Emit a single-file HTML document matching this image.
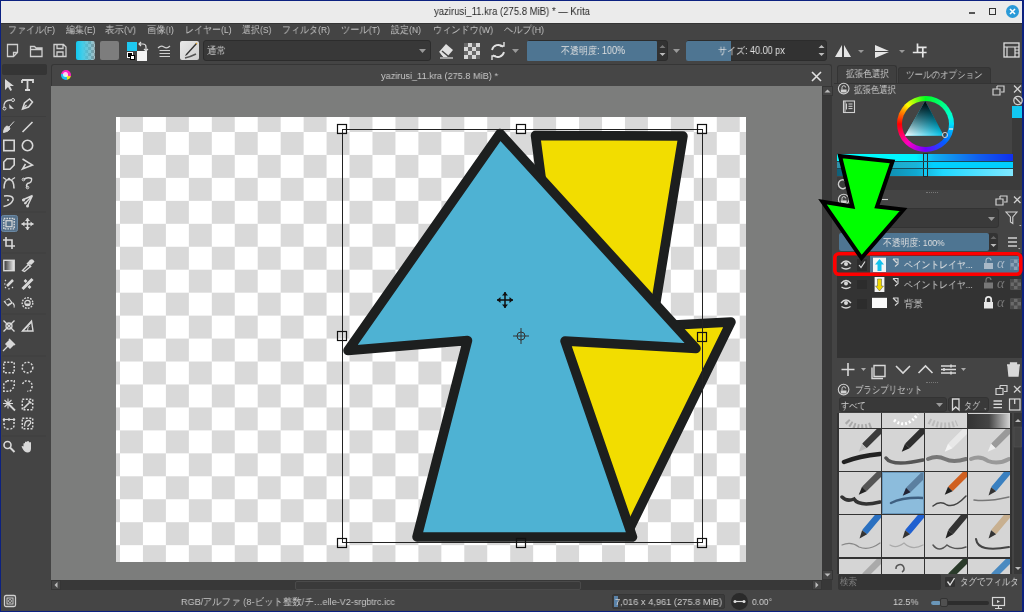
<!DOCTYPE html>
<html><head><meta charset="utf-8">
<style>
*{box-sizing:border-box;margin:0;padding:0}
html,body{width:1024px;height:612px;overflow:hidden}
body{background:#0c2180;font-family:"Liberation Sans",sans-serif;position:relative;color:#d0d0d0}
.a{position:absolute}
.t{position:absolute;white-space:nowrap;line-height:1;will-change:transform}
.menu{font-size:9.6px;color:#c4c4c4;top:25.4px}
svg{position:absolute;overflow:visible}
</style></head><body>
<!-- window background -->
<div class="a" style="left:1px;top:1px;width:1021px;height:610px;background:#444444"></div>
<!-- title bar -->
<div class="a" style="left:1px;top:1px;width:1021px;height:22px;background:#ebebeb"></div><div class="a" style="left:1px;top:23px;width:1021px;height:1px;background:#353535"></div>
<div class="t" style="transform:scaleX(0.9072);transform-origin:0 0;left:433.7px;top:6px;font-size:10.5px;color:#262626">yazirusi_11.kra (275.8 MiB) * — Krita</div>
<div class="a" style="left:969px;top:12.3px;width:6px;height:1.4px;background:#555"></div>
<div class="a" style="left:989px;top:8px;width:6.5px;height:6.5px;border:1.3px solid #333"></div>
<div class="a" style="left:1006px;top:4.7px;width:13px;height:13px;border-radius:50%;background:#2a9ad8"></div><svg width="14" height="14" style="left:1006px;top:4.7px"><path d="M4,4 l5,5 M9,4 l-5,5" stroke="#fff" stroke-width="1.6"/></svg>

<!-- MENU -->
<div class="t menu" style="transform:scaleX(0.8995);transform-origin:0 0;left:7.6px">ファイル(F)</div>
<div class="t menu" style="transform:scaleX(0.8995);transform-origin:0 0;left:65.5px">編集(E)</div>
<div class="t menu" style="transform:scaleX(0.9452);transform-origin:0 0;left:105px">表示(V)</div>
<div class="t menu" style="transform:scaleX(0.9290);transform-origin:0 0;left:147px">画像(I)</div>
<div class="t menu" style="transform:scaleX(0.8988);transform-origin:0 0;left:185px">レイヤー(L)</div>
<div class="t menu" style="transform:scaleX(0.8964);transform-origin:0 0;left:241.6px">選択(S)</div>
<div class="t menu" style="transform:scaleX(0.9001);transform-origin:0 0;left:282px">フィルタ(R)</div>
<div class="t menu" style="transform:scaleX(0.9231);transform-origin:0 0;left:341px">ツール(T)</div>
<div class="t menu" style="transform:scaleX(0.9001);transform-origin:0 0;left:391px">設定(N)</div>
<div class="t menu" style="transform:scaleX(0.9167);transform-origin:0 0;left:433px">ウィンドウ(W)</div>
<div class="t menu" style="transform:scaleX(0.9232);transform-origin:0 0;left:504px">ヘルプ(H)</div>
<svg width="1024" height="30" style="left:0;top:36px" fill="none" stroke="#cfcfcf" stroke-width="1.3">
  <path d="M7.5,8.5 h10 v8 l-4,4 h-6 z M13.5,20.5 v-4 h4"/>
  <path d="M30.5,10.5 h4 l1.5,1.5 h6 v8.5 h-11.5 z M30.5,13.5 h11.5"/>
  <path d="M54,8.5 h9.5 l2.5,2.5 v9.5 h-12 z M57,8.5 v4 h6 v-4 M57,20.5 v-4.5 h6 v4.5"/>
  <path d="M158,12 q3,-3 6,-1 t6,-1 M158,14.5 h12 M158,17.5 h12 M158,20.5 h12" stroke-width="1.2"/>
  <path d="M158,14.5 h1.5 M158,17.5 h1.5 M158,20.5 h1.5" stroke="#444444" stroke-width="1.2"/>
</svg>
<div class="a" style="left:76px;top:41px;width:19px;height:19px;border-radius:2px;background:linear-gradient(90deg,#11c8f0 0%,#44cde8 35%,rgba(80,200,230,0.2) 100%),repeating-conic-gradient(#bcbcbc 0 25%,#8a8a8a 0 50%) 0 0/6px 6px"></div>
<div class="a" style="left:100px;top:41px;width:19px;height:19px;border-radius:2px;background:#7d7d7d"></div>
<div class="a" style="left:127px;top:41.5px;width:9.5px;height:9.5px;background:#1ec8f0"></div>
<div class="a" style="left:137px;top:51px;width:9.5px;height:9.5px;background:#f4f4f4"></div>
<div class="a" style="left:127px;top:52px;width:6px;height:6px;background:#000;border:1px solid #fff"></div>
<div class="a" style="left:130px;top:55px;width:5px;height:5px;background:#fff;border:1px solid #000"></div>
<svg width="14" height="12" style="left:137px;top:41px" fill="none" stroke="#ddd" stroke-width="1.2"><path d="M2,3 h4 q3,0 3,3 v4 M7,8 l2,2 l2,-2 M4,1 l-2,2 l2,2"/></svg>
<div class="a" style="left:180px;top:41px;width:19px;height:19px;border-radius:2px;background:linear-gradient(135deg,#e8e8e8,#cfcfcf)"></div>
<svg width="19" height="19" style="left:180px;top:41px"><path d="M16,2 L6,13 L5,15 L7,14 L17,3 z" fill="#333"/><path d="M16,2 l1,1" stroke="#d9a030" stroke-width="1.5"/><path d="M5,17 q5,-1 11,-4" stroke="#555" stroke-width="1.5" fill="none"/></svg>
<!-- blend mode combo -->
<div class="a" style="left:203px;top:40px;width:228px;height:21px;background:#383838;border:1px solid #2c2c2c;border-radius:3px"></div>
<div class="t" style="transform:scaleX(0.9500);transform-origin:0 0;left:207px;top:45.5px;font-size:10px;color:#d0d0d0">通常</div>
<svg width="8" height="5" style="left:419px;top:49px"><path d="M0,0 h7 l-3.5,4 z" fill="#999"/></svg>
<!-- eraser, checker, reload -->
<svg width="20" height="20" style="left:436px;top:40px"><path d="M3,12 l7,-8 l7,6 l-6,7 h-4 z" fill="#e0e0e0"/><path d="M3,12 l4,5 h-4 z" fill="#444444"/><path d="M4,18 h13" stroke="#e0e0e0" stroke-width="1.2"/><path d="M6,11 l6,5" stroke="#444444" stroke-width="1.5"/></svg>
<div class="a" style="left:464px;top:43px;width:16px;height:16px;background:repeating-conic-gradient(#e0e0e0 0 25%,#6a6a6a 0 50%) 0 0/8px 8px;opacity:.95"></div>
<svg width="18" height="18" style="left:489px;top:42px" fill="none" stroke="#e0e0e0" stroke-width="1.8"><path d="M14,5 A6.5,6.5 0 0 0 3,8"/><path d="M4,13 A6.5,6.5 0 0 0 15,10"/><path d="M11,4 h4 v-4 M7,14 h-4 v4" stroke-width="1.4"/></svg>
<svg width="8" height="5" style="left:512px;top:49px"><path d="M0,0 h7 l-3.5,4 z" fill="#999"/></svg>
<!-- opacity slider -->
<div class="a" style="left:527px;top:40px;width:141px;height:21px;background:#323232;border-radius:3px;border:1px solid #2c2c2c"></div>
<div class="a" style="left:527px;top:40.5px;width:130px;height:20px;background:#4e7592;border-radius:1px"></div>
<div class="t" style="transform:scaleX(0.8996);transform-origin:0 0;left:560.6px;top:45.5px;font-size:10px;color:#e2e2e2">不透明度: 100%</div>
<svg width="8" height="16" style="left:659px;top:43px"><path d="M0.5,5 l3,-3 l3,3 z" fill="#777"/><path d="M0.5,10 l3,3 l3,-3 z" fill="#bbb"/></svg>
<svg width="8" height="5" style="left:673px;top:49px"><path d="M0,0 h7 l-3.5,4 z" fill="#999"/></svg>
<!-- size slider -->
<div class="a" style="left:686px;top:40px;width:141px;height:21px;background:#323232;border-radius:3px;border:1px solid #2c2c2c"></div>
<div class="a" style="left:686px;top:40.5px;width:44.5px;height:20px;background:#4e7592;border-radius:2px 0 0 2px"></div>
<div class="t" style="transform:scaleX(0.9023);transform-origin:0 0;left:718.3px;top:45.5px;font-size:10px;color:#e2e2e2">サイズ: 40.00 px</div>
<svg width="8" height="16" style="left:818px;top:43px"><path d="M0.5,5 l3,-3 l3,3 z" fill="#bbb"/><path d="M0.5,10 l3,3 l3,-3 z" fill="#bbb"/></svg>
<!-- mirror + crop icons -->
<svg width="200" height="24" style="left:830px;top:38px">
  <path d="M5,19 L12,7 V19 z M14,7 L21,19 H14 z" fill="#e6e6e6"/>
  <path d="M28,12 h6 l-3,3 z" fill="#999"/>
  <path d="M45,7 L59,13 H45 z M45,14 H59 L45,20 z" fill="#e6e6e6"/>
  <path d="M69,12 h6 l-3,3 z" fill="#999"/>
  <path d="M87.5,5.6 V14.5 M82.8,14.5 H96.6 M92.8,9.4 V19.4 M87.5,9.4 H96.6" fill="none" stroke="#e6e6e6" stroke-width="1.7"/>
  <rect x="174" y="5" width="15" height="14" fill="none" stroke="#ddd" stroke-width="1.3"/>
  <path d="M174,9 h15 M177,9 v10 M185,9 v10 M185,12 h4 M185,15 h4" fill="none" stroke="#ddd" stroke-width="1.2"/>
</svg>


<!-- LEFT TOOLBOX -->
<div class="a" style="left:2px;top:64px;width:45px;height:11px;background:#353535;border-radius:2px"></div>
<svg width="50" height="612" style="left:0;top:0"><path d="M2,116.5 H46" stroke="#3e3e3e" stroke-width="1"/><path d="M2,212 H46" stroke="#3e3e3e" stroke-width="1"/><path d="M2,253 H46" stroke="#3e3e3e" stroke-width="1"/><path d="M2,314 H46" stroke="#3e3e3e" stroke-width="1"/><path d="M2,356 H46" stroke="#3e3e3e" stroke-width="1"/><path d="M2,436 H46" stroke="#3e3e3e" stroke-width="1"/><g transform="translate(3,79)"><path d="M2,0 L2,11 L5,8 L7.5,12 L9,11 L7,7 L11,7 z" fill="#d8d8d8"/></g><g transform="translate(21.5,79)"><path d="M0.5,1 h11 v3 M0.5,4 v-3 M6,1 v10 M3.5,11 h5" fill="none" stroke="#d8d8d8" stroke-width="1.8"/></g><g transform="translate(3,98)"><path d="M1,10 Q0,2 8,2" fill="none" stroke="#d8d8d8" stroke-width="1.3"/><circle cx="1.5" cy="10.5" r="1.5" fill="none" stroke="#d8d8d8"/><circle cx="10" cy="2" r="1.5" fill="none" stroke="#d8d8d8"/><path d="M6,6 L11,11 L6.5,10.5 z" fill="#d8d8d8"/></g><g transform="translate(21.5,98)"><path d="M1,11 L3,5 L8,1 L11,4 L7,9 z" fill="none" stroke="#d8d8d8" stroke-width="1.5"/><path d="M1,11 L5,7" stroke="#d8d8d8" stroke-width="1.2"/></g><g transform="translate(3,121)"><path d="M11,0.5 L6,6 L4,5 Q1,6 0.5,11.5 Q5,11 7,8 L6,6" fill="#d8d8d8" stroke="#d8d8d8" stroke-width="1"/></g><g transform="translate(21.5,121)"><path d="M1,11 L11,1" stroke="#d8d8d8" stroke-width="1.6"/></g><g transform="translate(3,139.5)"><rect x="0.8" y="0.8" width="10.4" height="10.4" fill="none" stroke="#d8d8d8" stroke-width="1.6"/></g><g transform="translate(21.5,139.5)"><circle cx="6" cy="6" r="5.2" fill="none" stroke="#d8d8d8" stroke-width="1.6"/></g><g transform="translate(3,158)"><path d="M4,0.8 H11.2 V7 L7,11.2 H0.8 V4 z" fill="none" stroke="#d8d8d8" stroke-width="1.6"/></g><g transform="translate(21.5,158)"><path d="M1,1 L11,7 L1,11 L4,6" fill="none" stroke="#d8d8d8" stroke-width="1.5"/></g><g transform="translate(3,176.5)"><path d="M1,12 Q1,3 6,3 Q11,3 11,12" fill="none" stroke="#d8d8d8" stroke-width="1.6"/><path d="M0,1 L3,3 M12,1 L9,3" stroke="#d8d8d8" stroke-width="1.2"/><circle cx="6" cy="2.5" r="1.3" fill="#d8d8d8"/></g><g transform="translate(21.5,176.5)"><path d="M2,3 Q6,0 10,2 Q11,6 6,7 Q4,9 6,11" fill="none" stroke="#d8d8d8" stroke-width="1.4"/><circle cx="2" cy="3" r="1.3" fill="none" stroke="#d8d8d8"/><circle cx="6" cy="11" r="1.3" fill="none" stroke="#d8d8d8"/></g><g transform="translate(3,195)"><path d="M1,1 Q11,0 10,5 Q8,10 0.5,11.5" fill="none" stroke="#d8d8d8" stroke-width="1.5"/><circle cx="5" cy="5" r="1" fill="#d8d8d8"/></g><g transform="translate(21.5,195)"><path d="M11,0.5 L3,9 M11,0.5 L1,5 M11,0.5 L6,11" stroke="#d8d8d8" stroke-width="1.4"/><circle cx="2" cy="5" r="1.5" fill="#d8d8d8"/><circle cx="6" cy="11" r="1.5" fill="#d8d8d8"/><circle cx="4" cy="8" r="1.2" fill="#d8d8d8"/></g><rect x="1.5" y="215.5" width="16" height="16" rx="2" fill="#56718a" stroke="#6a88a3" stroke-width="1"/><g transform="translate(3,217.7)"><rect x="0.8" y="0.8" width="10.4" height="10.4" fill="none" stroke="#d8d8d8" stroke-width="1.4" stroke-dasharray="1.6 1"/><rect x="3" y="3" width="6" height="6" fill="none" stroke="#d8d8d8" stroke-width="1.2"/></g><g transform="translate(21.5,218)"><path d="M6,0 V12 M0,6 H12" stroke="#d8d8d8" stroke-width="1.5"/><path d="M6,0 L3.5,3 H8.5 z M6,12 L3.5,9 H8.5 z M0,6 L3,3.5 V8.5 z M12,6 L9,3.5 V8.5 z" fill="#d8d8d8"/></g><g transform="translate(3,237)"><path d="M3,0 V9 H12 M0,3 H9 V12" fill="none" stroke="#d8d8d8" stroke-width="1.6"/></g><g transform="translate(3,259.5)"><defs><linearGradient id="gg"><stop offset="0" stop-color="#333"/><stop offset="1" stop-color="#eee"/></linearGradient></defs><rect x="0.8" y="0.8" width="10.4" height="10.4" fill="url(#gg)" stroke="#d8d8d8" stroke-width="1.4"/></g><g transform="translate(21.5,259.5)"><path d="M1,11 L7,5 L9,7 L3,12 z" fill="none" stroke="#d8d8d8" stroke-width="1.3"/><path d="M6.5,4 L9,1 Q11,0 12,2 L9,5 M5.5,3.5 L9.5,7.5" stroke="#d8d8d8" stroke-width="1.6" fill="#d8d8d8"/></g><g transform="translate(3,278)"><path d="M4,8 L10,2" stroke="#d8d8d8" stroke-width="2.5"/><path d="M1,6 h1.5 M6,10 v1.5 M2,2 l1,1 M2,10 l1,-1 M9,9 l1,1" stroke="#d8d8d8" stroke-width="1.2"/></g><g transform="translate(21.5,278)"><path d="M1,11 L11,1" stroke="#d8d8d8" stroke-width="3"/><path d="M3,2 L5,4 M7,8 L9,10" stroke="#d8d8d8" stroke-width="2.5"/></g><g transform="translate(3,296.5)"><path d="M0.5,5 L6,1.5 L10,6.5 L5,10 z" fill="#d8d8d8"/><path d="M2,4 L6,3 L8,6 L4,8 z" fill="#444444"/><path d="M10,6.5 Q12,9 11,11" stroke="#d8d8d8" stroke-width="1.3" fill="none"/></g><g transform="translate(21.5,297)"><circle cx="6" cy="6" r="5.3" fill="none" stroke="#d8d8d8" stroke-width="1.4" stroke-dasharray="1.8 1.2"/><circle cx="6" cy="6" r="2.7" fill="none" stroke="#d8d8d8" stroke-width="1.2"/><path d="M3.5,6.5 h5 v2 h-5z" fill="#d8d8d8"/></g><g transform="translate(3,320)"><path d="M0.5,0.5 L11.5,11.5 M11.5,0.5 L0.5,11.5" stroke="#d8d8d8" stroke-width="1.4"/><circle cx="6" cy="6" r="3" fill="none" stroke="#d8d8d8" stroke-width="1.3"/></g><g transform="translate(21.5,320)"><path d="M1,11 H11.5 V11 L10,1 z" fill="none" stroke="#d8d8d8" stroke-width="1.4" transform=""/><path d="M1,11 L10,2" stroke="#d8d8d8" stroke-width="1.4"/><path d="M6,11 Q6,7 8,6" fill="none" stroke="#d8d8d8" stroke-width="1"/></g><g transform="translate(3,339)"><path d="M0,12 L5,7" stroke="#d8d8d8" stroke-width="1.2"/><path d="M3,5 L7,1 L11,5 L7,9 z M6,0 L12,6" fill="#d8d8d8" stroke="#d8d8d8" stroke-width="1.5"/></g><g transform="translate(3,361.5)"><rect x="0.8" y="0.8" width="10.4" height="10.4" stroke="#d8d8d8" stroke-width="1.5" stroke-dasharray="2 1.5" fill="none"/></g><g transform="translate(21.5,361.5)"><circle cx="6" cy="6" r="5.3" stroke="#d8d8d8" stroke-width="1.5" stroke-dasharray="2 1.5" fill="none"/></g><g transform="translate(3,380)"><path d="M4,0.8 H11.2 V7 L7,11.2 H0.8 V4 z" stroke="#d8d8d8" stroke-width="1.5" stroke-dasharray="2 1.5" fill="none" transform="rotate(0)"/></g><g transform="translate(21.5,380)"><path d="M1,4 Q3,0 7,1 Q12,3 10,9 Q9,12 6,11" stroke="#d8d8d8" stroke-width="1.5" stroke-dasharray="2 1.5" fill="none"/></g><g transform="translate(3,398.5)"><path d="M5,5 L12,12" stroke="#d8d8d8" stroke-width="1.8"/><path d="M5,0 V10 M0,5 H10 M1.5,1.5 L8.5,8.5 M8.5,1.5 L1.5,8.5" stroke="#d8d8d8" stroke-width="1.1"/></g><g transform="translate(21.5,398.5)"><rect x="0.8" y="0.8" width="10.4" height="10.4" stroke="#d8d8d8" stroke-width="1.5" stroke-dasharray="2 1.5" fill="none"/><path d="M2,10 L8,4 M7,2 L10,5" stroke="#d8d8d8" stroke-width="1.6"/></g><g transform="translate(3,417.5)"><path d="M1,2 V8 Q1,11.5 6,11.5 Q11,11.5 11,8 V2" stroke="#d8d8d8" stroke-width="1.5" stroke-dasharray="2 1.5" fill="none"/><path d="M1,2 H11" stroke="#d8d8d8" stroke-width="1.1"/><circle cx="1" cy="2" r="1.2" fill="#d8d8d8"/><circle cx="11" cy="2" r="1.2" fill="#d8d8d8"/><circle cx="6" cy="2" r="1.2" fill="#d8d8d8"/></g><g transform="translate(21.5,417.5)"><rect x="0.8" y="0.8" width="10.4" height="10.4" stroke="#d8d8d8" stroke-width="1.5" stroke-dasharray="2 1.5" fill="none"/><path d="M3,9 Q3,3 7,3 Q10,3 9,6 L6,9" fill="none" stroke="#d8d8d8" stroke-width="1.3"/></g><g transform="translate(3,440.5)"><circle cx="4.5" cy="4.5" r="3.5" fill="none" stroke="#d8d8d8" stroke-width="1.6"/><path d="M7,7 L11.5,11.5" stroke="#d8d8d8" stroke-width="2"/></g><g transform="translate(21.5,440.5)"><path d="M2,6 V3 Q3,2 3.5,3 V6 V1.5 Q4.5,0.5 5.5,1.5 V6 V1 Q6.5,0 7.5,1 V6 V2 Q8.5,1 9.5,2 V8 Q9.5,12 6,12 Q3,12 1,8 L0,6 Q1,5 2,6 z" fill="#d8d8d8"/></g></svg>


<!-- CANVAS SUBWINDOW -->
<div class="a" style="left:51px;top:64px;width:781px;height:22px;background:#464646;border:1px solid #363636;border-bottom:none;border-radius:3px 3px 0 0"></div>
<div class="a" style="left:51px;top:86px;width:771px;height:494px;background:#7c7d7c"></div>
<!-- checker canvas -->
<div class="a" style="left:116px;top:117px;width:630px;height:445px;background:repeating-conic-gradient(#d9d9d9 0 25%,#ffffff 0 50%);background-size:45.92px 45.92px;background-position:26.96px 37.96px"></div>
<!-- scrollbars -->
<div class="a" style="left:822px;top:86px;width:10px;height:494px;background:#383838"></div>
<div class="a" style="left:51px;top:580px;width:781px;height:10px;background:#383838"></div>

<!-- doc tab contents -->
<div class="a" style="left:60.5px;top:69.5px;width:10px;height:10px;border-radius:50%;background:conic-gradient(#ff20c0 0 30%,#f0e020 30% 45%,#20c0f0 45% 80%,#ff20c0 80%)"></div>
<div class="a" style="left:63px;top:72px;width:5px;height:5px;border-radius:50%;background:#fff;opacity:.8"></div>
<div class="t" style="transform:scaleX(0.9553);transform-origin:0 0;left:381px;top:71px;font-size:9.6px;color:#c8c8c8">yazirusi_11.kra (275.8 MiB) *</div>
<svg width="12" height="12" style="left:810.5px;top:70.5px"><path d="M1,1 l9,9 M10,1 l-9,9" stroke="#e0e0e0" stroke-width="1.6"/></svg>
<!-- scrollbar arrows -->
<svg width="12" height="12" style="left:822px;top:86px"><rect x="0.5" y="0.5" width="10" height="9" fill="#444" stroke="#353535"/><path d="M2.5,6.5 l3,-3 l3,3 z" fill="#bbb"/></svg>
<svg width="12" height="12" style="left:822px;top:570px"><rect x="0.5" y="0.5" width="10" height="9" fill="#444" stroke="#353535"/><path d="M2.5,3.5 l3,3 l3,-3 z" fill="#bbb"/></svg>
<svg width="12" height="12" style="left:51px;top:580px"><rect x="0.5" y="0.5" width="9" height="9" fill="#444" stroke="#353535"/><path d="M6.5,2 l-3,3 l3,3 z" fill="#bbb"/></svg>
<svg width="12" height="12" style="left:812px;top:580px"><rect x="0.5" y="0.5" width="9" height="9" fill="#444" stroke="#353535"/><path d="M3.5,2 l3,3 l-3,3 z" fill="#bbb"/></svg>
<div class="a" style="left:295px;top:580.5px;width:286px;height:9px;background:#3a3a3a;border:1px solid #4a4a4a;border-radius:2px"></div>
<!-- ARTWORK -->
<svg width="1024" height="612" style="left:0;top:0">
  <g stroke="#1d1f1f" stroke-width="9.5" stroke-linejoin="round">
    <polygon points="535.5,135.5 683,136 653,320 560,320" fill="#f2dd00"/>
    <polygon points="731,322 628,532 540,332" fill="#f2dd00"/>
    <polygon points="500,133.5 696,348.5 565,341 632.5,537 417,537 467.5,340.5 348,350.5" fill="#4eb2d3"/>
  </g>
  <g fill="none" stroke="#222" stroke-width="1">
    <rect x="342.5" y="129.5" width="360" height="413"/>
  </g>
  <g fill="#fff" fill-opacity="0" stroke="#111" stroke-width="1.2">
    <rect x="337.5" y="124.5" width="9" height="9"/>
    <rect x="516.5" y="124.5" width="9" height="9"/>
    <rect x="697.5" y="124.5" width="9" height="9"/>
    <rect x="337.5" y="331.5" width="9" height="9"/>
    <rect x="697.5" y="332.5" width="9" height="9"/>
    <rect x="337.5" y="538.5" width="9" height="9"/>
    <rect x="516.5" y="538.5" width="9" height="9"/>
    <rect x="697.5" y="538.5" width="9" height="9"/>
  </g>
</svg>

<!-- RIGHT DOCK -->
<!-- dock tabs -->
<div class="a" style="left:834px;top:63px;width:188px;height:527px;background:#444444"></div>
<div class="a" style="left:836.5px;top:64.5px;width:60.5px;height:19px;background:#3f3f3f;border:1px solid #343434;border-bottom:none;border-radius:3px 3px 0 0"></div>
<div class="a" style="left:897.5px;top:66.5px;width:93px;height:16px;background:#393939;border:1px solid #343434;border-bottom:none;border-radius:3px 3px 0 0"></div>
<div class="t" style="transform:scaleX(0.8600);transform-origin:0 0;left:845.5px;top:69px;font-size:9.5px;color:#cfcfcf">拡張色選択</div>
<div class="t" style="transform:scaleX(0.8500);transform-origin:0 0;left:906px;top:69.5px;font-size:9.5px;color:#c8c8c8">ツールのオプション</div>
<div class="a" style="left:834px;top:82.5px;width:188px;height:1px;background:#343434"></div>
<!-- color selector dock -->
<svg width="190" height="130" style="left:834px;top:82px" fill="none" stroke="#d0d0d0">
  <circle cx="9.7" cy="6.6" r="5.3" stroke-width="1.1"/>
  <path d="M6.8,7.5 h5.8 v3 h-5.8 z" fill="#d0d0d0" stroke="none"/><path d="M8,7.5 v-2 a1.8,1.8 0 0 1 3.6,0" stroke-width="1"/>
  <rect x="9.5" y="19" width="11" height="11.5" stroke-width="1.1"/>
  <path d="M12.5,21.5 v6 M14.5,22 h4 M14.5,24.3 h4 M14.5,26.6 h4 M11,19 v11.5" stroke-width="1"/>
  <path d="M163,4 h7 v6 h-3 M163,4 v3 M162.5,7 h-3.5 v6 h7 v-6 z" stroke-width="1.2"/>
  <path d="M180,3.5 l7,7 M187,3.5 l-7,7" stroke-width="1.3"/>
  <circle cx="184" cy="18.5" r="4.2" stroke-width="1.3"/><path d="M181,15.5 l6,6" stroke-width="1.3"/>
</svg>
<div class="t" style="transform:scaleX(0.8400);transform-origin:0 0;left:854px;top:84.5px;font-size:9.5px;color:#cfcfcf">拡張色選択</div>
<div class="a" style="left:1012px;top:106.3px;width:10px;height:11.5px;background:#12c8f2"></div>
<div class="a" style="left:1012px;top:118px;width:10px;height:71px;background:#3a3a3a"></div>
<!-- color wheel -->
<div class="a" style="left:897px;top:95.7px;width:56.6px;height:56.6px;border-radius:50%;background:conic-gradient(#00ff20,#00ffd0 20%,#00e0ff 25%,#0060ff 37%,#7000ff 50%,#ff00c0 62%,#ff0000 75%,#ff9000 83%,#ffff00 88%,#00ff20)"></div>
<div class="a" style="left:902px;top:100.7px;width:46.6px;height:46.6px;border-radius:50%;background:#444444"></div>
<svg width="60" height="60" style="left:895px;top:94px">
  <defs>
    <linearGradient id="tw" gradientUnits="userSpaceOnUse" x1="9.9" y1="41.8" x2="40.2" y2="25.7"><stop offset="0" stop-color="#ffffff"/><stop offset="1" stop-color="#ffffff" stop-opacity="0"/></linearGradient>
    <linearGradient id="tb" gradientUnits="userSpaceOnUse" x1="30.2" y1="6.9" x2="30.2" y2="41.8"><stop offset="0" stop-color="#000"/><stop offset="1" stop-color="#000" stop-opacity="0"/></linearGradient>
  </defs>
  <path d="M30.2,6.9 L9.9,41.8 L48.8,41.8 z" fill="#00c8f0"/>
  <path d="M30.2,6.9 L9.9,41.8 L48.8,41.8 z" fill="url(#tw)"/>
  <path d="M30.2,6.9 L9.9,41.8 L48.8,41.8 z" fill="url(#tb)"/>
  <circle cx="50" cy="41" r="2.6" fill="none" stroke="#ccc" stroke-width="1"/>
  <path d="M54,35 h4" stroke="#eee" stroke-width="1.3"/>
</svg>
<!-- color sliders -->
<div class="a" style="left:837px;top:153.5px;width:176px;height:7.5px;background:linear-gradient(90deg,#00ffff 0%,#00f4ff 45%,#10b0f0 55%,#1060f0 80%,#1030f0 100%)"></div>
<div class="a" style="left:837px;top:161px;width:176px;height:7.7px;background:linear-gradient(90deg,#3090a8,#18b4d8 45%,#00d0ff 55%,#00d0ff)"></div>
<div class="a" style="left:837px;top:168.7px;width:176px;height:7.6px;background:linear-gradient(90deg,#106078,#10a8d0 45%,#20d8ff 60%,#80e8ff)"></div>
<div class="a" style="left:922.8px;top:153px;width:5.7px;height:23.5px;border:1px solid #2a2a2a;background:#12c8f2"></div>
<div class="a" style="left:837px;top:176.5px;width:185px;height:13px;background:#3b3b3b"></div><div class="a" style="left:837px;top:160.6px;width:176px;height:0.8px;background:#1a4a5a"></div><div class="a" style="left:837px;top:168.3px;width:176px;height:0.8px;background:#1a4a5a"></div>
<svg width="12" height="12" style="left:837px;top:178px" fill="none" stroke="#ccc" stroke-width="1.4"><path d="M9.5,3.5 A4.5,4.5 0 1 0 10,8"/><path d="M7,3 h3 v-3"/></svg>
<div class="a" style="left:925.7px;top:192px;width:12.3px;height:1px;border-top:1px dotted #777"></div>
<!-- layers dock -->
<svg width="190" height="60" style="left:834px;top:192px" fill="none" stroke="#d0d0d0">
  <circle cx="9.7" cy="7.5" r="5.3" stroke-width="1.1"/>
  <path d="M6.8,8.4 h5.8 v3 h-5.8 z" fill="#d0d0d0" stroke="none"/><path d="M8,8.4 v-2 a1.8,1.8 0 0 1 3.6,0" stroke-width="1"/>
  <path d="M48,7.5 h6" stroke-width="1.1"/>
  <path d="M166,4 h7 v6 h-3 M166,4 v3 M165.5,7 h-3.5 v6 h7 v-6 z" stroke-width="1.2"/>
  <path d="M180,4.5 l6.5,6.5 M186.5,4.5 l-6.5,6.5" stroke-width="1.3"/>
  <path d="M172,20 h11 l-4.2,5 v6.5 l-2.4,-1.5 v-5 z" stroke-width="1.1"/>
  <path d="M185,33 h2.5 l-1.2,1.3 z" fill="#bbb" stroke="none"/>
  <path d="M174,46 h9 M174,50 h9 M174,54 h9" stroke-width="1.4"/>
  <path d="M184,56 h2.5 l-1.2,1.3 z" fill="#bbb" stroke="none"/>
</svg>
<div class="a" style="left:837.6px;top:208px;width:161px;height:20px;background:#3a3a3a;border:1px solid #333;border-radius:3px"></div>
<svg width="8" height="5" style="left:987.5px;top:216.5px"><path d="M0,0 h7 l-3.5,4 z" fill="#999"/></svg>
<div class="a" style="left:838.5px;top:232.6px;width:159px;height:18px;background:#333;border-radius:3px"></div>
<div class="a" style="left:838.5px;top:232.6px;width:150.5px;height:18px;background:#4e7592;border-radius:2px"></div>
<div class="t" style="transform:scaleX(0.8816);transform-origin:0 0;left:883px;top:237.5px;font-size:9.6px;color:#e0e0e0">不透明度: 100%</div>
<svg width="8" height="16" style="left:990px;top:234px"><path d="M0.5,5 l3,-3 l3,3 z" fill="#666"/><path d="M0.5,10 l3,3 l3,-3 z" fill="#bbb"/></svg>
<!-- layer list -->
<div class="a" style="left:837px;top:253px;width:185px;height:105px;background:#333333"></div>
<div class="a" style="left:837px;top:255.5px;width:32.5px;height:17px;background:#383838"></div>
<div class="a" style="left:869.5px;top:255.5px;width:151.5px;height:17px;background:#4f7592"></div>
<div class="a" style="left:857px;top:259px;width:10px;height:12px;background:#2c2c2c"></div>
<div class="a" style="left:857px;top:279.5px;width:10px;height:9.5px;background:#2c2c2c"></div>
<div class="a" style="left:857px;top:299px;width:10px;height:9.6px;background:#2c2c2c"></div>
<svg width="190" height="70" style="left:834px;top:250px">
  <g fill="none" stroke="#d8d8d8" stroke-width="1.3">
    <path d="M7,14 q5,-6 10,0 M7.5,17.5 q4.5,3 9,0"/><circle cx="12" cy="14" r="2" fill="#d8d8d8" stroke="none"/>
    <path d="M7,33.5 q5,-6 10,0 M7.5,37 q4.5,3 9,0"/><circle cx="12" cy="33.5" r="2" fill="#d8d8d8" stroke="none"/>
    <path d="M7,53 q5,-6 10,0 M7.5,56.5 q4.5,3 9,0"/><circle cx="12" cy="53" r="2" fill="#d8d8d8" stroke="none"/>
    <path d="M25,15 l2,2.5 l4,-6" stroke-width="1.2"/>
    <path d="M59,9 h5 v5 l-3,2.5 M59,9 l4,4" stroke-width="1.1"/>
    <path d="M59,28.5 h5 v5 l-3,2.5 M59,28.5 l4,4" stroke-width="1.1"/>
    <path d="M59,48 h5 v5 l-3,2.5 M59,48 l4,4" stroke-width="1.1"/>
  </g>
  <rect x="39" y="7.7" width="13" height="14.3" fill="#f4f4f4"/>
  <path d="M45.5,9 l4.5,5.5 h-2.5 v6.5 h-4 v-6.5 h-2.5 z" fill="#12c2ee"/>
  <rect x="40.6" y="27" width="9.8" height="15" fill="#f4f4f4"/>
  <path d="M45.5,41 l4,-5 h-2 v-7 h-4 v7 h-2 z" fill="#f0d800" stroke="#555" stroke-width="0.5"/>
  <rect x="38" y="47.8" width="15" height="10.2" fill="#fafafa"/>
  <g fill="#a9b9c8"><path d="M150,13 h9 v6 h-9 z"/><path d="M152,13 v-2.5 a2.5,2.5 0 0 1 5,0" fill="none" stroke="#a9b9c8" stroke-width="1.2"/></g>
  <g fill="#777"><path d="M150,32.5 h9 v6 h-9 z"/><path d="M152,32.5 v-2.5 a2.5,2.5 0 0 1 5,0" fill="none" stroke="#777" stroke-width="1.2"/></g>
  <g fill="#e8e8e8"><path d="M150,52 h9 v6.5 h-9 z"/><path d="M151.8,52 v-2.5 a2.7,2.7 0 0 1 5.4,0 v2.5" fill="none" stroke="#e8e8e8" stroke-width="1.8"/></g>
  <g font-family="Liberation Serif" font-style="italic" font-size="14">
    <text x="163" y="18" fill="#a9b9c8">α</text><text x="163" y="37.5" fill="#777">α</text><text x="163" y="57" fill="#777">α</text>
  </g>
  <rect x="176.4" y="9.4" width="10.6" height="10.6" fill="#8aa0b5"/><path d="M176.4,9.4 h3.5 v3.5 h-3.5 z M183.5,9.4 h3.5 v3.5 h-3.5 z M179.9,12.9 h3.5 v3.5 h-3.5 z M176.4,16.4 h3.5 v3.6 h-3.5 z M183.5,16.4 h3.5 v3.6 h-3.5 z" fill="#5e7a95"/>
  <rect x="176.4" y="29" width="10.6" height="10.6" fill="#6a6a6a"/><path d="M176.4,29 h3.5 v3.5 h-3.5 z M183.5,29 h3.5 v3.5 h-3.5 z M179.9,32.5 h3.5 v3.5 h-3.5 z M176.4,36 h3.5 v3.6 h-3.5 z M183.5,36 h3.5 v3.6 h-3.5 z" fill="#4a4a4a"/>
  <rect x="176.4" y="48.5" width="10.6" height="10.6" fill="#6a6a6a"/><path d="M176.4,48.5 h3.5 v3.5 h-3.5 z M183.5,48.5 h3.5 v3.5 h-3.5 z M179.9,52 h3.5 v3.5 h-3.5 z M176.4,55.5 h3.5 v3.6 h-3.5 z M183.5,55.5 h3.5 v3.6 h-3.5 z" fill="#4a4a4a"/>
</svg>
<div class="t" style="transform:scaleX(0.8795);transform-origin:0 0;left:904.4px;top:260px;font-size:9.6px;color:#e6e6e6">ペイントレイヤ...</div>
<div class="t" style="transform:scaleX(0.8795);transform-origin:0 0;left:904.4px;top:279.5px;font-size:9.6px;color:#c8c8c8">ペイントレイヤ...</div>
<div class="t" style="transform:scaleX(0.9500);transform-origin:0 0;left:904.4px;top:299px;font-size:9.6px;color:#c8c8c8">背景</div>
<!-- layer buttons -->
<svg width="190" height="30" style="left:834px;top:358px" fill="none" stroke="#d8d8d8" stroke-width="1.6">
  <path d="M14,5 v13 M7.5,11.5 h13"/>
  <path d="M27,10 h5 l-2.5,3 z" fill="#aaa" stroke="none"/>
  <path d="M40,7.5 h11 v11 h-11 z" stroke-width="1.4"/><path d="M38,9.5 v11 h11" stroke-width="1.4"/>
  <path d="M62,8 l7,7 l7,-7"/>
  <path d="M84.5,15 l7,-7 l7,7"/>
  <path d="M107,8 h15 M107,11.5 h15 M107,15 h15" stroke-width="1.3"/><path d="M117,6.5 v3 M110,10 v3 M117,13.5 v3" stroke-width="1.6"/>
  <path d="M127,10 h5 l-2.5,3 z" fill="#aaa" stroke="none"/>
  <path d="M173,7 h13 M176.5,7 v-2 h6 v2 M174,8.5 l1,9.5 h9 l1,-9.5 z" fill="#d8d8d8" stroke-width="1.3"/>
</svg>
<div class="a" style="left:925.7px;top:381.5px;width:12.3px;height:1px;border-top:1px dotted #777"></div>
<!-- brush presets dock -->
<svg width="190" height="30" style="left:834px;top:382px" fill="none" stroke="#d0d0d0">
  <circle cx="9.6" cy="7.6" r="5.3" stroke-width="1.1"/>
  <path d="M6.7,8.5 h5.8 v3 h-5.8 z" fill="#d0d0d0" stroke="none"/><path d="M8,8.5 v-2 a1.8,1.8 0 0 1 3.6,0" stroke-width="1"/>
  <path d="M166,3.5 h7 v6 h-3 M166,3.5 v3 M165.5,6.5 h-3.5 v6 h7 v-6 z" stroke-width="1.2"/>
  <path d="M180,4 l6.5,6.5 M186.5,4 l-6.5,6.5" stroke-width="1.3"/>
</svg>
<div class="t" style="transform:scaleX(0.8425);transform-origin:0 0;left:854.6px;top:385px;font-size:9.6px;color:#cfcfcf">ブラシプリセット</div>
<div class="a" style="left:838.5px;top:396.8px;width:108px;height:15.5px;background:#393939;border:1px solid #333;border-radius:3px"></div>
<div class="t" style="transform:scaleX(0.8200);transform-origin:0 0;left:841.4px;top:400.5px;font-size:9.6px;color:#d0d0d0">すべて</div>
<svg width="8" height="5" style="left:936px;top:403px"><path d="M0,0 h7 l-3.5,4 z" fill="#999"/></svg>
<div class="a" style="left:948.4px;top:396.8px;width:40.4px;height:15.5px;background:#393939;border:1px solid #333;border-radius:3px"></div>
<svg width="80" height="20" style="left:948px;top:396px" fill="none" stroke="#d8d8d8" stroke-width="1.3">
  <path d="M4.5,3 h6.5 v11 l-3.2,-3 l-3.3,3 z"/>
  <path d="M36,12.5 h2.5 l-1.2,1.3 z" fill="#bbb" stroke="none"/>
  <path d="M45.5,5 h8.5 M45.5,8.3 h8.5 M45.5,11.6 h8.5" stroke-width="1.4"/>
  <rect x="61.5" y="3" width="10.5" height="11" stroke-width="1.2"/><path d="M66.7,3 v5"/>
</svg>
<div class="t" style="transform:scaleX(0.8000);transform-origin:0 0;left:963.6px;top:400.5px;font-size:9.6px;color:#d0d0d0">タグ</div>
<!-- brush grid -->
<div class="a" style="left:837px;top:413px;width:175px;height:161px;background:#333333;overflow:hidden">
  <div class="a" style="left:2.0px;top:-11.5px;width:41.7px;height:26.1px;background:#d5d5d5;overflow:hidden"><svg width="42" height="42" style="left:0;top:0"><path d="M8,19 q10,10 25,4" fill="none" stroke="#aaa" stroke-width="6" stroke-dasharray="2 2"/></svg></div>
<div class="a" style="left:45.0px;top:-11.5px;width:41.7px;height:26.1px;background:#d5d5d5;overflow:hidden"><svg width="42" height="42" style="left:0;top:0"><path d="M12,18 q12,10 24,-6" fill="none" stroke="#fff" stroke-width="3" stroke-dasharray="2 2"/></svg></div>
<div class="a" style="left:88.0px;top:-11.5px;width:41.7px;height:26.1px;background:#d5d5d5;overflow:hidden"><svg width="42" height="42" style="left:0;top:0"><path d="M4,19 q14,8 28,2" fill="none" stroke="#bbb" stroke-width="6" stroke-dasharray="2 2"/></svg></div>
<div class="a" style="left:131.0px;top:-11.5px;width:41.7px;height:26.1px;background:#d5d5d5;overflow:hidden"><svg width="42" height="42" style="left:0;top:0"><defs><linearGradient id="bg4"><stop offset="0" stop-color="#333"/><stop offset="0.5" stop-color="#444"/><stop offset="1" stop-color="#d5d5d5"/></linearGradient></defs><rect x="0" y="12" width="42" height="16" fill="url(#bg4)"/></svg></div>
<div class="a" style="left:2.0px;top:16.3px;width:41.7px;height:41.5px;background:#d5d5d5;overflow:hidden"><svg width="42" height="42" style="left:0;top:0"><g transform="translate(28,14) rotate(45)"><rect x="-3" y="-22" width="6.5" height="26" rx="1" fill="#3a3a3a"/><path d="M-3,4 L3.5,4 L0.3,12 z" fill="#bbb"/></g><path d="M5,33 Q20,27 41,25" fill="none" stroke="#222" stroke-width="4.5" stroke-linecap="round"/></svg></div>
<div class="a" style="left:45.0px;top:16.3px;width:41.7px;height:41.5px;background:#d5d5d5;overflow:hidden"><svg width="42" height="42" style="left:0;top:0"><g transform="translate(28,14) rotate(45)"><rect x="-3" y="-22" width="6.5" height="26" rx="1" fill="#2e2e2e"/><path d="M-3,4 L3.5,4 L0.3,12 z" fill="#222"/></g><path d="M4,29 Q10,38 41,31" fill="none" stroke="#555" stroke-width="3.5" stroke-linecap="round"/></svg></div>
<div class="a" style="left:88.0px;top:16.3px;width:41.7px;height:41.5px;background:#d5d5d5;overflow:hidden"><svg width="42" height="42" style="left:0;top:0"><g transform="translate(28,14) rotate(45)"><rect x="-3" y="-22" width="6.5" height="26" rx="1" fill="#e8e8e8"/><path d="M-3,4 L3.5,4 L0.3,12 z" fill="#f4f4f4"/></g><path d="M3,30 Q12,26 20,30 Q28,34 41,30" fill="none" stroke="#777" stroke-width="4" stroke-linecap="round"/></svg></div>
<div class="a" style="left:131.0px;top:16.3px;width:41.7px;height:41.5px;background:#d5d5d5;overflow:hidden"><svg width="42" height="42" style="left:0;top:0"><g transform="translate(28,14) rotate(45)"><rect x="-3" y="-22" width="6.5" height="26" rx="1" fill="#9a9a9a"/><path d="M-3,4 L3.5,4 L0.3,12 z" fill="#eee"/></g><path d="M3,30 Q12,26 20,32 Q30,36 41,30" fill="none" stroke="#999" stroke-width="4" stroke-linecap="round"/></svg></div>
<div class="a" style="left:2.0px;top:59.2px;width:41.7px;height:41.8px;background:#d5d5d5;overflow:hidden"><svg width="42" height="42" style="left:0;top:0"><g transform="translate(28,14) rotate(45)"><rect x="-3" y="-22" width="6.5" height="26" rx="1" fill="#555"/><path d="M-3,4 L3.5,4 L0.3,12 z" fill="#222"/></g><path d="M3,25 Q8,30 15,27 Q20,35 41,30" fill="none" stroke="#333" stroke-width="3.5" stroke-linecap="round"/></svg></div>
<div class="a" style="left:45.0px;top:59.2px;width:41.7px;height:41.8px;background:#8cbcdc;border:1px solid #6a98bc;overflow:hidden"><svg width="42" height="42" style="left:0;top:0"><g transform="translate(28,14) rotate(45)"><rect x="-3" y="-22" width="6.5" height="26" rx="1" fill="#5b7fa0"/><path d="M-3,4 L3.5,4 L0.3,12 z" fill="#223"/></g><path d="M8,30 Q20,24 41,25" fill="none" stroke="#3e5f80" stroke-width="2.5" stroke-linecap="round"/></svg></div>
<div class="a" style="left:88.0px;top:59.2px;width:41.7px;height:41.8px;background:#d5d5d5;overflow:hidden"><svg width="42" height="42" style="left:0;top:0"><g transform="translate(28,14) rotate(45)"><rect x="-3" y="-22" width="6.5" height="26" rx="1" fill="#d06020"/><path d="M-3,4 L3.5,4 L0.3,12 z" fill="#222"/></g><path d="M8,34 Q15,28 22,33 Q30,36 41,24" fill="none" stroke="#444" stroke-width="1.5" stroke-linecap="round"/></svg></div>
<div class="a" style="left:131.0px;top:59.2px;width:41.7px;height:41.8px;background:#d5d5d5;overflow:hidden"><svg width="42" height="42" style="left:0;top:0"><g transform="translate(28,14) rotate(40)"><rect x="-3" y="-22" width="6.5" height="26" rx="1" fill="#3a80c0"/><path d="M-3,4 L3.5,4 L0.3,12 z" fill="#333"/></g><path d="M6,28 Q20,30 41,25" fill="none" stroke="#777" stroke-width="1.5" stroke-linecap="round"/></svg></div>
<div class="a" style="left:2.0px;top:102.0px;width:41.7px;height:42.0px;background:#d5d5d5;overflow:hidden"><svg width="42" height="42" style="left:0;top:0"><g transform="translate(28,14) rotate(40)"><rect x="-3" y="-22" width="6.5" height="26" rx="1" fill="#2a70c0"/><path d="M-3,4 L3.5,4 L0.3,12 z" fill="#333"/></g><path d="M3,30 Q12,26 20,32 Q30,36 41,28" fill="none" stroke="#888" stroke-width="1.2" stroke-linecap="round"/></svg></div>
<div class="a" style="left:45.0px;top:102.0px;width:41.7px;height:42.0px;background:#d5d5d5;overflow:hidden"><svg width="42" height="42" style="left:0;top:0"><g transform="translate(28,14) rotate(40)"><rect x="-3" y="-22" width="6.5" height="26" rx="1" fill="#2060d0"/><path d="M-3,4 L3.5,4 L0.3,12 z" fill="#333"/></g><path d="M8,30 Q14,34 22,28 Q30,36 41,30" fill="none" stroke="#aaa" stroke-width="1.2" stroke-linecap="round"/></svg></div>
<div class="a" style="left:88.0px;top:102.0px;width:41.7px;height:42.0px;background:#d5d5d5;overflow:hidden"><svg width="42" height="42" style="left:0;top:0"><g transform="translate(28,14) rotate(40)"><rect x="-3" y="-22" width="6.5" height="26" rx="1" fill="#333"/><path d="M-3,4 L3.5,4 L0.3,12 z" fill="#222"/></g><path d="M8,30 Q14,38 22,30 Q30,36 41,32" fill="none" stroke="#555" stroke-width="1.5" stroke-linecap="round"/></svg></div>
<div class="a" style="left:131.0px;top:102.0px;width:41.7px;height:42.0px;background:#d5d5d5;overflow:hidden"><svg width="42" height="42" style="left:0;top:0"><g transform="translate(28,14) rotate(40)"><rect x="-3" y="-22" width="6.5" height="26" rx="1" fill="#c8b090"/><path d="M-3,4 L3.5,4 L0.3,12 z" fill="#333"/></g><path d="M8,24 Q10,38 41,32" fill="none" stroke="#444" stroke-width="2" stroke-linecap="round"/></svg></div>
<div class="a" style="left:2.0px;top:146.0px;width:41.7px;height:41.0px;background:#d5d5d5;overflow:hidden"><svg width="42" height="42" style="left:0;top:0"><g transform="translate(28,14) rotate(45)"><rect x="-3" y="-22" width="6.5" height="26" rx="1" fill="#aaa"/><path d="M-3,4 L3.5,4 L0.3,12 z" fill="#ddd"/></g><path d="M0,0" fill="none" stroke="#999" stroke-width="0" stroke-linecap="round"/></svg></div>
<div class="a" style="left:45.0px;top:146.0px;width:41.7px;height:41.0px;background:#d5d5d5;overflow:hidden"><svg width="42" height="42" style="left:0;top:0"><path d="M14,10 a4,4 0 1 1 6,3" fill="none" stroke="#555" stroke-width="1.5"/></svg></div>
<div class="a" style="left:88.0px;top:146.0px;width:41.7px;height:41.0px;background:#d5d5d5;overflow:hidden"><svg width="42" height="42" style="left:0;top:0"><g transform="translate(28,14) rotate(45)"><rect x="-3" y="-22" width="6.5" height="26" rx="1" fill="#2a3a2a"/><path d="M-3,4 L3.5,4 L0.3,12 z" fill="#222"/></g><path d="M0,0" fill="none" stroke="#555" stroke-width="0" stroke-linecap="round"/></svg></div>
<div class="a" style="left:131.0px;top:146.0px;width:41.7px;height:41.0px;background:#d5d5d5;overflow:hidden"><svg width="42" height="42" style="left:0;top:0"><g transform="translate(28,14) rotate(45)"><rect x="-3" y="-22" width="6.5" height="26" rx="1" fill="#4a8ac0"/><path d="M-3,4 L3.5,4 L0.3,12 z" fill="#ddd"/></g><path d="M0,0" fill="none" stroke="#999" stroke-width="0" stroke-linecap="round"/></svg></div>
</div>
<div class="a" style="left:1013.5px;top:413px;width:8.5px;height:161px;background:#383838"></div>
<svg width="10" height="165" style="left:1013px;top:412px"><path d="M2,10 l3,-3 l3,3 z" fill="#bbb"/><path d="M2,155 l3,3 l3,-3 z" fill="#bbb"/><rect x="1" y="15" width="7.5" height="20" fill="#444" stroke="#555" stroke-width="0.5"/></svg>
<!-- search + filter -->
<div class="a" style="left:837.7px;top:574px;width:103px;height:16px;background:#353535;border-radius:2px"></div>
<div class="t" style="transform:scaleX(0.8350);transform-origin:0 0;left:839.6px;top:577px;font-size:9.5px;color:#808080">検索</div>
<div class="a" style="left:945.3px;top:577px;width:10.2px;height:9.5px;background:#333;border-radius:1px"></div>
<svg width="12" height="12" style="left:945px;top:576px"><path d="M2.5,5.5 l2.5,3.5 l4.5,-7" fill="none" stroke="#ddd" stroke-width="1.3"/></svg>
<div class="t" style="transform:scaleX(0.8371);transform-origin:0 0;left:960px;top:577px;font-size:9.6px;color:#d0d0d0">タグでフィルタ</div>


<!-- STATUS BAR -->
<div class="a" style="left:1px;top:590px;width:1021px;height:21px;background:#454545"></div>
<svg width="14" height="14" style="left:3px;top:594px" fill="none" stroke="#cfcfcf"><rect x="1.5" y="1.5" width="11" height="11" rx="1.5" stroke-width="1.3"/><rect x="4" y="4" width="6" height="6" stroke-width="1"/><circle cx="7" cy="7" r="1.5" stroke-width="0.8"/></svg>
<div class="t" style="transform:scaleX(0.9433);transform-origin:0 0;left:181px;top:597px;font-size:9.6px;color:#c8c8c8">RGB/アルファ (8-ビット整数/チ…elle-V2-srgbtrc.icc</div>
<div class="a" style="left:612px;top:594px;width:112.5px;height:15px;background:#3b3b3b;border:1px solid #363636;border-radius:2px"></div>
<div class="a" style="left:614px;top:596px;width:3.5px;height:11px;background:#5a82a8"></div>
<div class="t" style="transform:scaleX(0.9691);transform-origin:0 0;left:614.5px;top:597px;font-size:9.6px;color:#d0d0d0">7,016 x 4,961 (275.8 MiB)</div>
<div class="a" style="left:731px;top:593px;width:17px;height:17px;border-radius:50%;background:#2a2a2a"></div>
<svg width="20" height="20" style="left:730px;top:592px"><path d="M5,9.5 h9" stroke="#ddd" stroke-width="1.2"/><circle cx="5" cy="9.5" r="1.5" fill="#ddd"/><circle cx="14" cy="9.5" r="1.5" fill="#ddd"/></svg>
<div class="t" style="transform:scaleX(0.8883);transform-origin:0 0;left:752px;top:597px;font-size:9.6px;color:#d0d0d0">0.00°</div>
<div class="t" style="transform:scaleX(0.9337);transform-origin:0 0;left:893px;top:597px;font-size:9.6px;color:#cfcfcf">12.5%</div>
<div class="a" style="left:930.5px;top:601px;width:58.5px;height:3.5px;background:#2d2d2d;border-radius:2px"></div>
<div class="a" style="left:930.5px;top:601px;width:10px;height:3.5px;background:#6a96b8;border-radius:2px"></div>
<div class="a" style="left:939.7px;top:598px;width:8.5px;height:9px;background:#505050;border:1px solid #333;border-radius:2px"></div>
<svg width="16" height="14" style="left:991px;top:596px" fill="none" stroke="#d8d8d8" stroke-width="1.2"><rect x="1.5" y="1.5" width="12" height="8"/><path d="M4,12.5 h7 M7.5,9.5 v3"/><path d="M6,4 l3,1.5 l-3,1.5 z" fill="#d8d8d8" stroke="none"/></svg>

<!-- OVERLAYS -->
<svg width="1024" height="612" style="left:0;top:0">
  <path d="M505,292 V308 M497,300 H513" stroke="#111" stroke-width="1.5"/>
  <path d="M505,292 l-3,3.5 h6 z M505,308 l-3,-3.5 h6 z M497,300 l3.5,-3 v6 z M513,300 l-3.5,-3 v6 z" fill="#111"/>
  <circle cx="521" cy="336" r="4" fill="none" stroke="#333" stroke-width="1"/>
  <path d="M521,328 V344 M513,336 H529" stroke="#333" stroke-width="1"/>
  <rect x="834.8" y="253.8" width="186" height="20.5" rx="4" fill="none" stroke="#ff0000" stroke-width="3.6"/>
  <polygon points="840,156 892.5,161.5 877,206.5 903.5,209.6 861.5,258 822.5,201.8 852.5,206.5" fill="#00ff00" stroke="#000" stroke-width="4" stroke-linejoin="miter" stroke-miterlimit="3"/>
</svg>
</body></html>
